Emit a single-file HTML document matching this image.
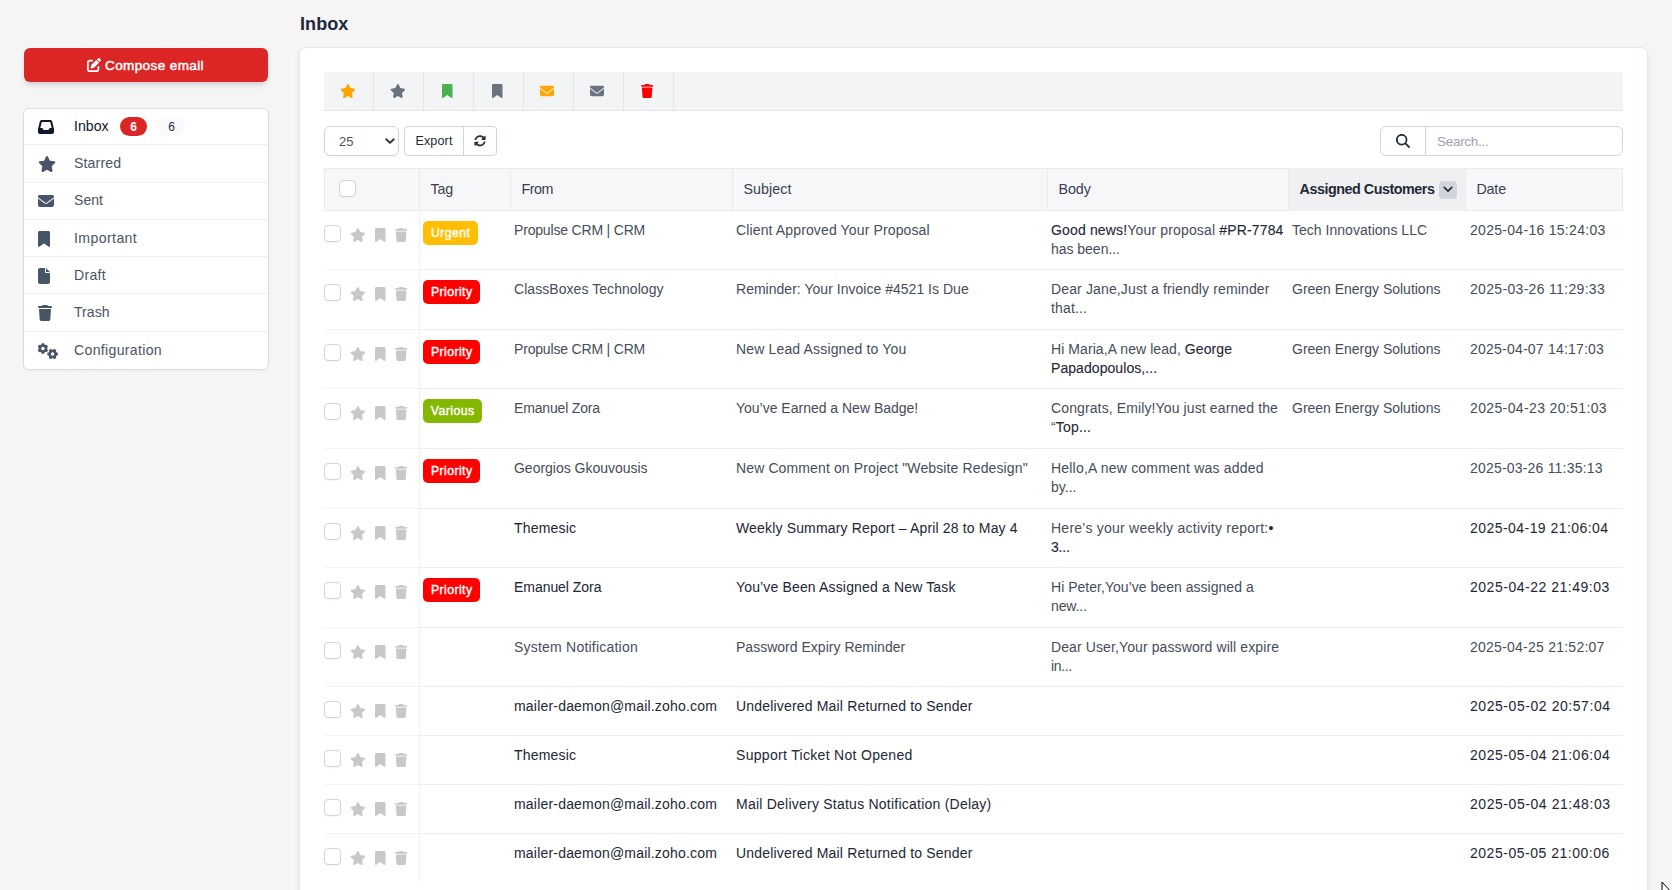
<!DOCTYPE html>
<html lang="en">
<head>
<meta charset="utf-8">
<title>Inbox</title>
<style>
*{box-sizing:border-box;margin:0;padding:0}
html,body{width:1672px;height:890px;overflow:hidden}
body{background:#f5f5f5;font-family:"Liberation Sans",sans-serif;color:#4b5563;font-size:14px;position:relative}
svg{display:block}
b{font-weight:400;color:#1f2937;-webkit-text-stroke:.12px #1f2937}
h1{position:absolute;left:300px;top:12px;font-size:18px;line-height:24px;font-weight:700;color:#1e293b;white-space:nowrap}
.compose{position:absolute;left:24px;top:48px;width:244px;height:34px;background:#dc2626;border-radius:6px;color:#fff;font-weight:700;font-size:13.5px;line-height:34px;box-shadow:0 4px 6px -1px rgba(0,0,0,.12),0 2px 4px -2px rgba(0,0,0,.1);white-space:nowrap}
.compose svg{position:absolute;left:63px;top:9.600px}
.compose span{position:absolute;left:81px;top:1px;font-weight:400;-webkit-text-stroke:.45px #fff}
.side{position:absolute;left:23px;top:108px;width:246px;height:262px;background:#fff;border:1px solid #d9dce1;border-radius:6px;overflow:hidden;box-shadow:0 1px 2px rgba(0,0,0,.05)}
.side .it{position:absolute;left:0;width:244px;height:37.3px;font-size:14.1px;color:#4b5563;white-space:nowrap}
.side .dv{position:absolute;left:0;width:244px;height:1px;background:#eef0f3}
.side .it .ic{position:absolute;left:14px;top:0;height:36px;display:flex;align-items:center}
.side .it .ic svg{fill:#475569}
.side .it .tx{position:absolute;left:50px;top:-1px;line-height:36px}
.side .it.act{color:#111827}
.side .it.act .ic svg{fill:#0f172a}
.b1{position:absolute;left:96px;top:8px;width:27px;height:19px;border-radius:10px;background:#dc2626;color:#fff;font-size:12px;font-weight:700;text-align:center;line-height:20.5px}
.b2{position:absolute;left:134px;top:8px;width:27px;height:19px;border-radius:10px;background:#f8fafc;color:#1f2937;font-size:12px;text-align:center;line-height:20.5px}
.card{position:absolute;left:299px;top:47px;width:1349px;height:860px;background:#fff;border:1px solid #e4e8ee;border-radius:7px;box-shadow:0 4px 6px -1px rgba(0,0,0,.1),0 2px 4px -2px rgba(0,0,0,.08)}
.tools{position:absolute;left:24px;top:24px;width:1299px;height:39px;background:#f3f4f6;border-bottom:1px solid #e3e5ea}
.tc{position:absolute;top:0;width:50px;height:38px;border-right:1px solid #e3e5ea}
.tc svg{position:absolute;top:12px}
.sel{position:absolute;left:24px;top:78px;width:75px;height:30px;border:1px solid #d1d5db;border-radius:6px;font-size:13px;color:#4b5563;box-shadow:0 1px 2px rgba(0,0,0,.05)}
.sel span{position:absolute;left:14px;top:0;line-height:30px}
.sel svg{position:absolute;left:59.7px;top:11px}
.btn{position:absolute;top:78px;height:30px;border:1px solid #d1d5db;font-size:12.5px;color:#1f2937;line-height:28px;text-align:center;background:#fff;white-space:nowrap}
.export{left:104px;width:60px;border-radius:4px 0 0 4px}
.refresh{left:163px;width:34px;border-radius:0 4px 4px 0;display:flex;align-items:center;justify-content:center}
.sicon{position:absolute;left:1080px;top:78px;width:46px;height:30px;border:1px solid #d1d5db;border-radius:6px 0 0 6px;display:flex;align-items:center;justify-content:center}
.sinput{position:absolute;left:1125px;top:78px;width:198px;height:30px;border:1px solid #d1d5db;border-radius:0 6px 6px 0;font-size:13.5px;color:#9ca3af;line-height:29px;padding-left:11px;white-space:nowrap}
.thead{position:absolute;left:24px;top:120px;width:1299px;height:43px;background:#f7f7f9;border:1px solid #e8eaed;font-size:14.3px;color:#374151}
.th{position:absolute;top:-1px;height:43px;line-height:43px;border-right:1px solid #e8eaed;padding-left:10.5px;white-space:nowrap;margin-left:-1px}
.th.c6{border-right:0}
.c0{left:0;width:96px}
.c1{left:96px;width:91px}
.c2{left:187px;width:222px}
.c3{left:409px;width:315px}
.c4{left:724px;width:241px}
.c5{left:965px;width:177px}
.c6{left:1142px;width:157px}
.th.sorted{background:#f0f0f3;font-weight:700;color:#1f2937}
.chev{position:absolute;left:150px;top:12.5px;width:18px;height:18px;border-radius:4px;background:#d1d5db;display:flex;align-items:center;justify-content:center}
.cb{position:absolute;width:16px;height:16px;border:1px solid #d1d5db;border-radius:4px;background:#fff;box-shadow:0 1px 1px rgba(0,0,0,.04)}
.th .cb{left:15px;top:12.3px;width:16.5px;height:16.5px}
.tbody{position:absolute;left:24px;top:163px;width:1299px}
.tr{position:absolute;left:0;width:1299px}
.tr.two{height:60px}
.tr.one{height:49px}
.td{position:absolute;top:0;height:100%;padding:10px 0 0 4px;line-height:19.3px;font-size:14px;white-space:nowrap;color:#454d5a}
.td.c0{border-right:1px solid #f1f2f4}
.td.c1{padding:0}
.td.c2{left:186px}
.td.c3{left:408px}
.td.c4{left:723px}
.td.c5{left:964px}
.td.c6{left:1142px}
.tr.un .td{color:#1f2937;-webkit-text-stroke:.04px #1f2937}
.tr .td.c4{color:#454d5a;-webkit-text-stroke:0}
.td .cb{left:.3px;top:14.3px;width:16.5px;height:16.5px}
.a{position:absolute;top:17px}
.a svg{fill:#c8c8c8}
.a.s{left:26.3px}
.a.b{left:51.1px}
.a.t{left:71.4px}
.bd{position:absolute;left:3px;top:10px;height:24px;border-radius:5px;color:#fff;font-size:12.3px;font-weight:400;-webkit-text-stroke:.4px #fff;line-height:24px;text-align:center;white-space:nowrap}
.bd.urgent{background:#ffbe03}
.bd.priority{background:#ff0000}
.bd.various{background:#84b800}
.cursor{position:absolute;left:1661px;top:881px}
.hl{position:absolute;left:0;width:1299px;height:1px;background:linear-gradient(90deg,#f3f4f6 0,#f3f4f6 96px,#ecedf0 96px)}

</style>
</head>
<body>
<h1><span style="letter-spacing:0.089px">Inbox</span></h1>
<div class="compose"><svg viewBox="0 0 512 512" width="14" height="14" fill="#fff" fill-rule="evenodd"><path d="M471.600 21.700c-21.900-21.900-57.300-21.900-79.200 0L362.300 51.700l97.900 97.900 30.100-30.100c21.900-21.900 21.900-57.300 0-79.200L471.600 21.700zm-299.200 220c-6.100 6.100-10.800 13.600-13.500 21.900l-29.600 88.800c-2.900 8.600-.600 18.100 5.800 24.600s15.900 8.700 24.600 5.800l88.800-29.600c8.200-2.700 15.700-7.400 21.900-13.500L437.700 172.300 339.700 74.300 172.400 241.700zM96 64C43 64 0 107 0 160V416c0 53 43 96 96 96H352c53 0 96-43 96-96V320c0-17.700-14.300-32-32-32s-32 14.300-32 32v96c0 17.700-14.300 32-32 32H96c-17.700 0-32-14.300-32-32V160c0-17.700 14.300-32 32-32h96c17.700 0 32-14.300 32-32s-14.300-32-32-32H96z"/></svg><span style="letter-spacing:0.400px">Compose email</span></div>
<div class="side">
<div class="it act" style="top:0.0px"><span class="ic"><svg viewBox="0 0 512 512" width="16" height="16" fill-rule="evenodd"><path d="M121 32C91.600 32 66 52 58.900 80.500L1.900 308.400C.600 313.500 0 318.700 0 323.900V416c0 35.300 28.700 64 64 64H448c35.300 0 64-28.700 64-64V323.900c0-5.200-.600-10.400-1.900-15.500l-57-227.900C446 52 420.400 32 391 32H121zm0 64H391l48 192H387.800c-12.100 0-23.200 6.800-28.600 17.700l-14.300 28.600c-5.400 10.800-16.500 17.700-28.600 17.700H195.800c-12.100 0-23.200-6.800-28.600-17.700l-14.300-28.600c-5.400-10.800-16.500-17.700-28.600-17.700H73L121 96z"/></svg></span><span class="tx" style="letter-spacing:0.026px">Inbox</span><span class="b1">6</span><span class="b2">6</span></div>
<div class="dv" style="top:35px"></div>
<div class="it" style="top:37.0px"><span class="ic"><svg viewBox="0 0 576 512" width="18" height="16" fill-rule="evenodd"><path d="M316.900 18C311.600 7 300.400 0 288.100 0s-23.400 7-28.800 18L195 150.300 51.400 171.500c-12 1.800-22 10.200-25.700 21.700s-.700 24.200 7.900 32.700L137.800 329 113.200 474.700c-2 12 3 24.200 12.900 31.300s23 8 33.800 2.300l128.300-68.500 128.300 68.500c10.800 5.700 23.900 4.900 33.800-2.300s14.900-19.300 12.900-31.300L438.500 329 542.700 225.900c8.600-8.500 11.700-21.200 7.900-32.700s-13.700-19.900-25.700-21.700L381.200 150.300 316.900 18z"/></svg></span><span class="tx" style="letter-spacing:0.151px">Starred</span></div>
<div class="dv" style="top:73px"></div>
<div class="it" style="top:74.0px"><span class="ic"><svg viewBox="0 0 512 512" width="16" height="16" fill-rule="evenodd"><path d="M48 64C21.500 64 0 85.500 0 112c0 15.100 7.100 29.300 19.200 38.400L236.800 313.600c11.400 8.500 27 8.500 38.400 0L492.800 150.400c12.100-9.100 19.200-23.300 19.200-38.400c0-26.500-21.500-48-48-48H48zM0 176V384c0 35.300 28.700 64 64 64H448c35.300 0 64-28.700 64-64V176L294.400 339.200c-22.800 17.100-54 17.100-76.800 0L0 176z"/></svg></span><span class="tx" style="letter-spacing:0.000px">Sent</span></div>
<div class="dv" style="top:110px"></div>
<div class="it" style="top:112.0px"><span class="ic"><svg viewBox="0 0 384 512" width="12" height="16" fill-rule="evenodd"><path d="M0 48V487.700C0 501.100 10.900 512 24.300 512c5 0 9.900-1.500 14-4.400L192 400 345.700 507.600c4.100 2.900 9 4.400 14 4.400c13.400 0 24.300-10.900 24.300-24.300V48c0-26.500-21.500-48-48-48H48C21.500 0 0 21.500 0 48z"/></svg></span><span class="tx" style="letter-spacing:0.406px">Important</span></div>
<div class="dv" style="top:147px"></div>
<div class="it" style="top:149.0px"><span class="ic"><svg viewBox="0 0 384 512" width="12" height="16" fill-rule="evenodd"><path d="M0 64C0 28.700 28.700 0 64 0H224V128c0 17.700 14.300 32 32 32H384V448c0 35.300-28.700 64-64 64H64c-35.300 0-64-28.700-64-64V64zm384 64H256V0L384 128z"/></svg></span><span class="tx" style="letter-spacing:0.301px">Draft</span></div>
<div class="dv" style="top:184px"></div>
<div class="it" style="top:186.0px"><span class="ic"><svg viewBox="0 0 448 512" width="14" height="16" fill-rule="evenodd"><path d="M135.200 17.700L128 32H32C14.300 32 0 46.300 0 64S14.300 96 32 96H416c17.700 0 32-14.300 32-32s-14.300-32-32-32H320l-7.200-14.300C307.400 6.800 296.300 0 284.200 0H163.800c-12.100 0-23.200 6.800-28.600 17.700zM416 128H32L53.200 467c1.600 25.300 22.600 45 47.900 45H346.900c25.300 0 46.300-19.700 47.900-45L416 128z"/></svg></span><span class="tx" style="letter-spacing:0.019px">Trash</span></div>
<div class="dv" style="top:222px"></div>
<div class="it" style="top:224.0px"><span class="ic"><svg viewBox="0 0 640 512" width="20" height="16" fill-rule="evenodd"><path d="M106.2 47.7 L119.3 7.2 L194.7 7.2 L207.8 47.7 L242.7 67.9 L284.3 58.9 L322.1 124.3 L293.5 155.8 L293.5 196.2 L322.1 227.7 L284.3 293.1 L242.7 284.1 L207.8 304.3 L194.7 344.8 L119.3 344.8 L106.2 304.3 L71.3 284.1 L29.7 293.1 L-8.1 227.7 L20.5 196.2 L20.5 155.8 L-8.1 124.3 L29.7 58.9 L71.3 67.9Z M103.0 176.0 a54.0 54.0 0 1 0 108.0 0 a54.0 54.0 0 1 0 -108.0 0Z M595.3 301.2 L635.8 314.3 L635.8 389.7 L595.3 402.8 L575.1 437.7 L584.1 479.3 L518.7 517.1 L487.2 488.5 L446.8 488.5 L415.3 517.1 L349.9 479.3 L358.9 437.7 L338.7 402.8 L298.2 389.7 L298.2 314.3 L338.7 301.2 L358.9 266.3 L349.9 224.7 L415.3 186.9 L446.8 215.5 L487.2 215.5 L518.7 186.9 L584.1 224.7 L575.1 266.3Z M413.0 352.0 a54.0 54.0 0 1 0 108.0 0 a54.0 54.0 0 1 0 -108.0 0Z"/></svg></span><span class="tx" style="letter-spacing:0.316px">Configuration</span></div>
</div>
<div class="card">
<div class="tools"><div class="tc" style="left:0px"><svg viewBox="0 0 576 512" width="15.75" height="14" fill="#ffa500" style="left:15.62px;top:12.0px" fill-rule="evenodd"><path d="M316.900 18C311.600 7 300.400 0 288.100 0s-23.400 7-28.800 18L195 150.300 51.400 171.500c-12 1.800-22 10.200-25.700 21.700s-.700 24.200 7.900 32.700L137.800 329 113.200 474.700c-2 12 3 24.200 12.900 31.300s23 8 33.800 2.300l128.300-68.500 128.300 68.500c10.800 5.700 23.900 4.900 33.800-2.300s14.900-19.300 12.900-31.300L438.500 329 542.700 225.900c8.600-8.500 11.700-21.200 7.900-32.700s-13.700-19.900-25.700-21.700L381.200 150.300 316.900 18z"/></svg></div><div class="tc" style="left:50px"><svg viewBox="0 0 576 512" width="15.75" height="14" fill="#6b7280" style="left:15.62px;top:12.0px" fill-rule="evenodd"><path d="M316.900 18C311.600 7 300.400 0 288.100 0s-23.400 7-28.800 18L195 150.300 51.400 171.500c-12 1.800-22 10.200-25.700 21.700s-.700 24.200 7.900 32.700L137.800 329 113.200 474.700c-2 12 3 24.200 12.900 31.300s23 8 33.800 2.300l128.300-68.500 128.300 68.500c10.800 5.700 23.900 4.900 33.800-2.300s14.900-19.300 12.900-31.300L438.500 329 542.700 225.900c8.600-8.500 11.700-21.200 7.900-32.700s-13.700-19.900-25.700-21.700L381.200 150.300 316.900 18z"/></svg></div><div class="tc" style="left:100px"><svg viewBox="0 0 384 512" width="10.5" height="14" fill="#4caf50" style="left:18.25px;top:12.0px" fill-rule="evenodd"><path d="M0 48V487.700C0 501.100 10.900 512 24.300 512c5 0 9.900-1.500 14-4.400L192 400 345.700 507.600c4.100 2.900 9 4.400 14 4.400c13.400 0 24.300-10.900 24.300-24.300V48c0-26.500-21.500-48-48-48H48C21.500 0 0 21.500 0 48z"/></svg></div><div class="tc" style="left:150px"><svg viewBox="0 0 384 512" width="10.5" height="14" fill="#6b7280" style="left:18.25px;top:12.0px" fill-rule="evenodd"><path d="M0 48V487.700C0 501.100 10.900 512 24.300 512c5 0 9.900-1.500 14-4.400L192 400 345.700 507.600c4.100 2.900 9 4.400 14 4.400c13.400 0 24.300-10.900 24.300-24.300V48c0-26.500-21.500-48-48-48H48C21.500 0 0 21.500 0 48z"/></svg></div><div class="tc" style="left:200px"><svg viewBox="0 0 512 512" width="14" height="14" fill="#ffa500" style="left:15.80px;top:11.5px" fill-rule="evenodd"><path d="M48 64C21.500 64 0 85.500 0 112c0 15.100 7.100 29.300 19.200 38.400L236.800 313.600c11.400 8.500 27 8.500 38.400 0L492.800 150.400c12.100-9.100 19.200-23.300 19.200-38.400c0-26.500-21.500-48-48-48H48zM0 176V384c0 35.300 28.700 64 64 64H448c35.300 0 64-28.700 64-64V176L294.400 339.200c-22.800 17.100-54 17.100-76.800 0L0 176z"/></svg></div><div class="tc" style="left:250px"><svg viewBox="0 0 512 512" width="14" height="14" fill="#6b7280" style="left:15.80px;top:11.5px" fill-rule="evenodd"><path d="M48 64C21.500 64 0 85.500 0 112c0 15.100 7.100 29.300 19.200 38.400L236.800 313.600c11.400 8.500 27 8.500 38.400 0L492.800 150.400c12.100-9.100 19.200-23.300 19.200-38.400c0-26.500-21.500-48-48-48H48zM0 176V384c0 35.300 28.700 64 64 64H448c35.300 0 64-28.700 64-64V176L294.400 339.200c-22.800 17.100-54 17.100-76.800 0L0 176z"/></svg></div><div class="tc" style="left:300px"><svg viewBox="0 0 448 512" width="12.25" height="14" fill="#ff0000" style="left:17.38px;top:12.0px" fill-rule="evenodd"><path d="M135.200 17.700L128 32H32C14.300 32 0 46.300 0 64S14.300 96 32 96H416c17.700 0 32-14.300 32-32s-14.300-32-32-32H320l-7.200-14.300C307.400 6.800 296.300 0 284.200 0H163.800c-12.100 0-23.200 6.800-28.600 17.700zM416 128H32L53.200 467c1.600 25.300 22.600 45 47.900 45H346.900c25.300 0 46.300-19.700 47.900-45L416 128z"/></svg></div></div>
<div class="sel"><span>25</span><svg viewBox="0 0 12 8" width="10" height="6.600"><path d="M1.500 1.500L6 6l4.500-4.500" fill="none" stroke="#333" stroke-width="2.300" stroke-linecap="round" stroke-linejoin="round"/></svg></div>
<div class="btn export"><span style="letter-spacing:0.156px">Export</span></div><div class="btn refresh"><svg viewBox="0 0 512 512" width="12" height="11.6" fill="#273142" fill-rule="evenodd"><path d="M370.720 133.280C339.458 104.008 298.888 87.962 255.848 88c-77.458.068-144.328 53.178-162.791 126.850-1.344 5.363-6.122 9.150-11.651 9.150H24.103c-7.498 0-13.194-6.807-11.807-14.176C33.933 94.924 134.813 8 256 8c66.448 0 126.791 26.136 171.315 68.685L463.030 40.970C478.149 25.851 504 36.559 504 57.941V192c0 13.255-10.745 24-24 24H345.941c-21.382 0-32.090-25.851-16.971-40.971l41.750-41.749zM32 296h134.059c21.382 0 32.090 25.851 16.971 40.971l-41.750 41.750c31.262 29.273 71.835 45.319 114.876 45.280 77.418-.070 144.315-53.144 162.787-126.849 1.344-5.363 6.122-9.150 11.651-9.150h57.304c7.498 0 13.194 6.807 11.807 14.176C478.067 417.076 377.187 504 256 504c-66.448 0-126.791-26.136-171.315-68.685L48.970 471.030C33.851 486.149 8 475.441 8 454.059V320c0-13.255 10.745-24 24-24z"/></svg></div>
<div class="sicon"><svg viewBox="0 0 512 512" width="14" height="14" fill="#1e293b" fill-rule="evenodd"><path d="M416 208c0 45.900-14.900 88.300-40 122.700L502.600 457.400c12.500 12.500 12.500 32.800 0 45.300s-32.800 12.500-45.300 0L330.700 376c-34.400 25.200-76.800 40-122.700 40C93.100 416 0 322.900 0 208S93.100 0 208 0S416 93.100 416 208zM208 352a144 144 0 1 0 0-288 144 144 0 1 0 0 288z"/></svg></div><div class="sinput"><span style="letter-spacing:-0.286px">Search...</span></div>
<div class="thead">
<div class="th c0"><span class="cb"></span></div><div class="th c1"><span style="letter-spacing:-0.145px">Tag</span></div><div class="th c2"><span style="letter-spacing:-0.503px">From</span></div><div class="th c3"><span style="letter-spacing:0.048px">Subject</span></div><div class="th c4"><span style="letter-spacing:-0.084px">Body</span></div><div class="th c5 sorted"><span style="letter-spacing:-0.447px">Assigned Customers</span><span class="chev"><svg viewBox="0 0 12 8" width="10" height="7"><path d="M1.500 1.500L6 6l4.500-4.500" fill="none" stroke="#1f2937" stroke-width="2" stroke-linecap="round" stroke-linejoin="round"/></svg></span></div><div class="th c6"><span style="letter-spacing:-0.201px">Date</span></div>
</div>
<div class="tbody">
<div class="hl" style="top:58px"></div><div class="tr two" style="top:0.0px"><div class="td c0"><span class="cb"></span><span class="a s"><svg viewBox="0 0 576 512" width="15.75" height="14" fill-rule="evenodd"><path d="M316.900 18C311.600 7 300.400 0 288.100 0s-23.400 7-28.800 18L195 150.300 51.400 171.500c-12 1.800-22 10.200-25.700 21.700s-.700 24.200 7.900 32.700L137.800 329 113.200 474.700c-2 12 3 24.200 12.900 31.300s23 8 33.800 2.300l128.300-68.500 128.300 68.500c10.800 5.700 23.900 4.900 33.800-2.300s14.900-19.300 12.900-31.300L438.500 329 542.700 225.900c8.600-8.500 11.700-21.200 7.900-32.700s-13.700-19.900-25.700-21.700L381.200 150.300 316.900 18z"/></svg></span><span class="a b"><svg viewBox="0 0 384 512" width="10.5" height="14" fill-rule="evenodd"><path d="M0 48V487.700C0 501.100 10.900 512 24.300 512c5 0 9.900-1.500 14-4.400L192 400 345.700 507.600c4.100 2.900 9 4.400 14 4.400c13.400 0 24.300-10.900 24.300-24.300V48c0-26.500-21.500-48-48-48H48C21.500 0 0 21.500 0 48z"/></svg></span><span class="a t"><svg viewBox="0 0 448 512" width="12.25" height="14" fill-rule="evenodd"><path d="M135.200 17.700L128 32H32C14.300 32 0 46.300 0 64S14.300 96 32 96H416c17.700 0 32-14.300 32-32s-14.300-32-32-32H320l-7.200-14.300C307.400 6.800 296.300 0 284.200 0H163.800c-12.100 0-23.200 6.800-28.600 17.700zM416 128H32L53.200 467c1.600 25.300 22.600 45 47.900 45H346.900c25.300 0 46.300-19.700 47.900-45L416 128z"/></svg></span></div><div class="td c1"><span class="bd urgent" style="width:55.4px"><span style="letter-spacing:0.432px">Urgent</span></span></div><div class="td c2"><span style="letter-spacing:-0.179px">Propulse CRM | CRM</span></div><div class="td c3"><span style="letter-spacing:0.133px">Client Approved Your Proposal</span></div><div class="td c4"><div class="ln" style="letter-spacing:0.157px"><b>Good news!</b>Your proposal <b>#PR-7784</b></div><div class="ln" style="letter-spacing:-0.027px">has been...</div></div><div class="td c5"><span style="letter-spacing:0.024px">Tech Innovations LLC</span></div><div class="td c6"><span style="letter-spacing:0.292px">2025-04-16 15:24:03</span></div></div>
<div class="hl" style="top:118px"></div><div class="tr two" style="top:59.0px"><div class="td c0"><span class="cb"></span><span class="a s"><svg viewBox="0 0 576 512" width="15.75" height="14" fill-rule="evenodd"><path d="M316.900 18C311.600 7 300.400 0 288.100 0s-23.400 7-28.800 18L195 150.300 51.400 171.500c-12 1.800-22 10.200-25.700 21.700s-.700 24.200 7.900 32.700L137.800 329 113.200 474.700c-2 12 3 24.200 12.900 31.300s23 8 33.800 2.300l128.300-68.500 128.300 68.500c10.800 5.700 23.900 4.900 33.800-2.300s14.900-19.300 12.900-31.300L438.500 329 542.700 225.900c8.600-8.500 11.700-21.200 7.900-32.700s-13.700-19.900-25.700-21.700L381.200 150.300 316.900 18z"/></svg></span><span class="a b"><svg viewBox="0 0 384 512" width="10.5" height="14" fill-rule="evenodd"><path d="M0 48V487.700C0 501.100 10.900 512 24.300 512c5 0 9.900-1.500 14-4.400L192 400 345.700 507.600c4.100 2.900 9 4.400 14 4.400c13.400 0 24.300-10.900 24.300-24.300V48c0-26.500-21.500-48-48-48H48C21.500 0 0 21.500 0 48z"/></svg></span><span class="a t"><svg viewBox="0 0 448 512" width="12.25" height="14" fill-rule="evenodd"><path d="M135.200 17.700L128 32H32C14.300 32 0 46.300 0 64S14.300 96 32 96H416c17.700 0 32-14.300 32-32s-14.300-32-32-32H320l-7.200-14.300C307.400 6.800 296.300 0 284.200 0H163.800c-12.100 0-23.200 6.800-28.600 17.700zM416 128H32L53.200 467c1.600 25.300 22.600 45 47.900 45H346.900c25.300 0 46.300-19.700 47.900-45L416 128z"/></svg></span></div><div class="td c1"><span class="bd priority" style="width:57.4px"><span style="letter-spacing:0.405px">Priority</span></span></div><div class="td c2"><span style="letter-spacing:0.059px">ClassBoxes Technology</span></div><div class="td c3"><span style="letter-spacing:0.022px">Reminder: Your Invoice #4521 Is Due</span></div><div class="td c4"><div class="ln" style="letter-spacing:0.134px">Dear Jane,Just a friendly reminder</div><div class="ln" style="letter-spacing:0.149px">that...</div></div><div class="td c5"><span style="letter-spacing:-0.011px">Green Energy Solutions</span></div><div class="td c6"><span style="letter-spacing:0.321px">2025-03-26 11:29:33</span></div></div>
<div class="hl" style="top:177px"></div><div class="tr two" style="top:119.0px"><div class="td c0"><span class="cb"></span><span class="a s"><svg viewBox="0 0 576 512" width="15.75" height="14" fill-rule="evenodd"><path d="M316.900 18C311.600 7 300.400 0 288.100 0s-23.400 7-28.800 18L195 150.300 51.400 171.500c-12 1.800-22 10.200-25.700 21.700s-.700 24.200 7.900 32.700L137.800 329 113.200 474.700c-2 12 3 24.200 12.900 31.300s23 8 33.800 2.300l128.300-68.500 128.300 68.500c10.800 5.700 23.900 4.900 33.800-2.300s14.900-19.300 12.900-31.300L438.500 329 542.700 225.900c8.600-8.500 11.700-21.200 7.900-32.700s-13.700-19.900-25.700-21.700L381.200 150.300 316.900 18z"/></svg></span><span class="a b"><svg viewBox="0 0 384 512" width="10.5" height="14" fill-rule="evenodd"><path d="M0 48V487.700C0 501.100 10.900 512 24.300 512c5 0 9.900-1.500 14-4.400L192 400 345.700 507.600c4.100 2.900 9 4.400 14 4.400c13.400 0 24.300-10.900 24.300-24.300V48c0-26.500-21.500-48-48-48H48C21.500 0 0 21.500 0 48z"/></svg></span><span class="a t"><svg viewBox="0 0 448 512" width="12.25" height="14" fill-rule="evenodd"><path d="M135.200 17.700L128 32H32C14.300 32 0 46.300 0 64S14.300 96 32 96H416c17.700 0 32-14.300 32-32s-14.300-32-32-32H320l-7.200-14.300C307.400 6.800 296.300 0 284.200 0H163.800c-12.100 0-23.200 6.800-28.600 17.700zM416 128H32L53.200 467c1.600 25.300 22.600 45 47.900 45H346.900c25.300 0 46.300-19.700 47.900-45L416 128z"/></svg></span></div><div class="td c1"><span class="bd priority" style="width:57.4px"><span style="letter-spacing:0.405px">Priority</span></span></div><div class="td c2"><span style="letter-spacing:-0.179px">Propulse CRM | CRM</span></div><div class="td c3"><span style="letter-spacing:0.158px">New Lead Assigned to You</span></div><div class="td c4"><div class="ln" style="letter-spacing:0.075px">Hi Maria,A new lead, <b>George</b></div><div class="ln" style="letter-spacing:0.065px"><b>Papadopoulos,...</b></div></div><div class="td c5"><span style="letter-spacing:-0.011px">Green Energy Solutions</span></div><div class="td c6"><span style="letter-spacing:0.216px">2025-04-07 14:17:03</span></div></div>
<div class="hl" style="top:237px"></div><div class="tr two" style="top:178.0px"><div class="td c0"><span class="cb"></span><span class="a s"><svg viewBox="0 0 576 512" width="15.75" height="14" fill-rule="evenodd"><path d="M316.900 18C311.600 7 300.400 0 288.100 0s-23.400 7-28.800 18L195 150.300 51.400 171.500c-12 1.800-22 10.200-25.700 21.700s-.700 24.200 7.900 32.700L137.800 329 113.200 474.700c-2 12 3 24.200 12.900 31.300s23 8 33.800 2.300l128.300-68.500 128.300 68.500c10.800 5.700 23.900 4.900 33.800-2.300s14.900-19.300 12.900-31.300L438.500 329 542.700 225.900c8.600-8.500 11.700-21.200 7.900-32.700s-13.700-19.900-25.700-21.700L381.200 150.300 316.900 18z"/></svg></span><span class="a b"><svg viewBox="0 0 384 512" width="10.5" height="14" fill-rule="evenodd"><path d="M0 48V487.700C0 501.100 10.900 512 24.300 512c5 0 9.900-1.500 14-4.400L192 400 345.700 507.600c4.100 2.900 9 4.400 14 4.400c13.400 0 24.300-10.900 24.300-24.300V48c0-26.500-21.500-48-48-48H48C21.500 0 0 21.500 0 48z"/></svg></span><span class="a t"><svg viewBox="0 0 448 512" width="12.25" height="14" fill-rule="evenodd"><path d="M135.200 17.700L128 32H32C14.300 32 0 46.300 0 64S14.300 96 32 96H416c17.700 0 32-14.300 32-32s-14.300-32-32-32H320l-7.200-14.300C307.400 6.800 296.300 0 284.200 0H163.800c-12.100 0-23.200 6.800-28.600 17.700zM416 128H32L53.200 467c1.600 25.300 22.600 45 47.900 45H346.900c25.300 0 46.300-19.700 47.900-45L416 128z"/></svg></span></div><div class="td c1"><span class="bd various" style="width:59.3px"><span style="letter-spacing:0.418px">Various</span></span></div><div class="td c2"><span style="letter-spacing:-0.168px">Emanuel Zora</span></div><div class="td c3"><span style="letter-spacing:-0.007px">You’ve Earned a New Badge!</span></div><div class="td c4"><div class="ln" style="letter-spacing:0.118px">Congrats, Emily!You just earned the</div><div class="ln" style="letter-spacing:0.166px">“<b>Top...</b></div></div><div class="td c5"><span style="letter-spacing:-0.011px">Green Energy Solutions</span></div><div class="td c6"><span style="letter-spacing:0.368px">2025-04-23 20:51:03</span></div></div>
<div class="hl" style="top:297px"></div><div class="tr two" style="top:238.0px"><div class="td c0"><span class="cb"></span><span class="a s"><svg viewBox="0 0 576 512" width="15.75" height="14" fill-rule="evenodd"><path d="M316.900 18C311.600 7 300.400 0 288.100 0s-23.400 7-28.800 18L195 150.300 51.400 171.500c-12 1.800-22 10.200-25.700 21.700s-.700 24.200 7.900 32.700L137.800 329 113.200 474.700c-2 12 3 24.200 12.900 31.300s23 8 33.800 2.300l128.300-68.500 128.300 68.500c10.800 5.700 23.900 4.900 33.800-2.300s14.900-19.300 12.900-31.300L438.500 329 542.700 225.900c8.600-8.500 11.700-21.200 7.900-32.700s-13.700-19.900-25.700-21.700L381.200 150.300 316.900 18z"/></svg></span><span class="a b"><svg viewBox="0 0 384 512" width="10.5" height="14" fill-rule="evenodd"><path d="M0 48V487.700C0 501.100 10.900 512 24.300 512c5 0 9.900-1.500 14-4.400L192 400 345.700 507.600c4.100 2.900 9 4.400 14 4.400c13.400 0 24.300-10.900 24.300-24.300V48c0-26.500-21.500-48-48-48H48C21.500 0 0 21.500 0 48z"/></svg></span><span class="a t"><svg viewBox="0 0 448 512" width="12.25" height="14" fill-rule="evenodd"><path d="M135.200 17.700L128 32H32C14.300 32 0 46.300 0 64S14.300 96 32 96H416c17.700 0 32-14.300 32-32s-14.300-32-32-32H320l-7.200-14.300C307.400 6.800 296.300 0 284.200 0H163.800c-12.100 0-23.200 6.800-28.600 17.700zM416 128H32L53.200 467c1.600 25.300 22.600 45 47.900 45H346.900c25.300 0 46.300-19.700 47.900-45L416 128z"/></svg></span></div><div class="td c1"><span class="bd priority" style="width:57.4px"><span style="letter-spacing:0.405px">Priority</span></span></div><div class="td c2"><span style="letter-spacing:-0.019px">Georgios Gkouvousis</span></div><div class="td c3"><span style="letter-spacing:0.123px">New Comment on Project "Website Redesign"</span></div><div class="td c4"><div class="ln" style="letter-spacing:0.196px">Hello,A new comment was added</div><div class="ln" style="letter-spacing:0.017px">by...</div></div><div class="td c5"></div><div class="td c6"><span style="letter-spacing:0.196px">2025-03-26 11:35:13</span></div></div>
<div class="hl" style="top:356px"></div><div class="tr two un" style="top:298.0px"><div class="td c0"><span class="cb"></span><span class="a s"><svg viewBox="0 0 576 512" width="15.75" height="14" fill-rule="evenodd"><path d="M316.900 18C311.600 7 300.400 0 288.100 0s-23.400 7-28.800 18L195 150.300 51.400 171.500c-12 1.800-22 10.200-25.700 21.700s-.700 24.200 7.900 32.700L137.800 329 113.200 474.700c-2 12 3 24.200 12.900 31.300s23 8 33.800 2.300l128.300-68.500 128.300 68.500c10.800 5.700 23.900 4.900 33.800-2.300s14.900-19.300 12.900-31.300L438.500 329 542.700 225.900c8.600-8.500 11.700-21.200 7.900-32.700s-13.700-19.900-25.700-21.700L381.200 150.300 316.900 18z"/></svg></span><span class="a b"><svg viewBox="0 0 384 512" width="10.5" height="14" fill-rule="evenodd"><path d="M0 48V487.700C0 501.100 10.900 512 24.300 512c5 0 9.900-1.500 14-4.400L192 400 345.700 507.600c4.100 2.900 9 4.400 14 4.400c13.400 0 24.300-10.900 24.300-24.300V48c0-26.500-21.500-48-48-48H48C21.500 0 0 21.500 0 48z"/></svg></span><span class="a t"><svg viewBox="0 0 448 512" width="12.25" height="14" fill-rule="evenodd"><path d="M135.200 17.700L128 32H32C14.300 32 0 46.300 0 64S14.300 96 32 96H416c17.700 0 32-14.300 32-32s-14.300-32-32-32H320l-7.200-14.300C307.400 6.800 296.300 0 284.200 0H163.800c-12.100 0-23.200 6.800-28.600 17.700zM416 128H32L53.200 467c1.600 25.300 22.600 45 47.900 45H346.900c25.300 0 46.300-19.700 47.900-45L416 128z"/></svg></span></div><div class="td c1"></div><div class="td c2"><span style="letter-spacing:0.202px">Themesic</span></div><div class="td c3"><span style="letter-spacing:0.161px">Weekly Summary Report – April 28 to May 4</span></div><div class="td c4"><div class="ln" style="letter-spacing:0.241px">Here’s your weekly activity report:<b>•</b></div><div class="ln" style="letter-spacing:-0.220px"><b>3...</b></div></div><div class="td c5"></div><div class="td c6"><span style="letter-spacing:0.449px">2025-04-19 21:06:04</span></div></div>
<div class="hl" style="top:416px"></div><div class="tr two un" style="top:357.0px"><div class="td c0"><span class="cb"></span><span class="a s"><svg viewBox="0 0 576 512" width="15.75" height="14" fill-rule="evenodd"><path d="M316.900 18C311.600 7 300.400 0 288.100 0s-23.400 7-28.800 18L195 150.300 51.400 171.500c-12 1.800-22 10.200-25.700 21.700s-.700 24.200 7.900 32.700L137.800 329 113.200 474.700c-2 12 3 24.200 12.900 31.300s23 8 33.800 2.300l128.300-68.500 128.300 68.500c10.800 5.700 23.900 4.900 33.800-2.300s14.900-19.300 12.900-31.300L438.500 329 542.700 225.900c8.600-8.500 11.700-21.200 7.900-32.700s-13.700-19.900-25.700-21.700L381.200 150.300 316.900 18z"/></svg></span><span class="a b"><svg viewBox="0 0 384 512" width="10.5" height="14" fill-rule="evenodd"><path d="M0 48V487.700C0 501.100 10.900 512 24.300 512c5 0 9.900-1.500 14-4.400L192 400 345.700 507.600c4.100 2.900 9 4.400 14 4.400c13.400 0 24.300-10.900 24.300-24.300V48c0-26.500-21.500-48-48-48H48C21.500 0 0 21.500 0 48z"/></svg></span><span class="a t"><svg viewBox="0 0 448 512" width="12.25" height="14" fill-rule="evenodd"><path d="M135.200 17.700L128 32H32C14.300 32 0 46.300 0 64S14.300 96 32 96H416c17.700 0 32-14.300 32-32s-14.300-32-32-32H320l-7.200-14.300C307.400 6.800 296.300 0 284.200 0H163.800c-12.100 0-23.200 6.800-28.600 17.700zM416 128H32L53.200 467c1.600 25.300 22.600 45 47.900 45H346.900c25.300 0 46.300-19.700 47.900-45L416 128z"/></svg></span></div><div class="td c1"><span class="bd priority" style="width:57.4px"><span style="letter-spacing:0.405px">Priority</span></span></div><div class="td c2"><span style="letter-spacing:-0.047px">Emanuel Zora</span></div><div class="td c3"><span style="letter-spacing:0.154px">You’ve Been Assigned a New Task</span></div><div class="td c4"><div class="ln" style="letter-spacing:0.028px">Hi Peter,You’ve been assigned a</div><div class="ln" style="letter-spacing:-0.108px">new...</div></div><div class="td c5"></div><div class="td c6"><span style="letter-spacing:0.514px">2025-04-22 21:49:03</span></div></div>
<div class="hl" style="top:475px"></div><div class="tr two" style="top:417.0px"><div class="td c0"><span class="cb"></span><span class="a s"><svg viewBox="0 0 576 512" width="15.75" height="14" fill-rule="evenodd"><path d="M316.900 18C311.600 7 300.400 0 288.100 0s-23.400 7-28.800 18L195 150.300 51.400 171.500c-12 1.800-22 10.200-25.700 21.700s-.700 24.200 7.900 32.700L137.800 329 113.200 474.700c-2 12 3 24.200 12.900 31.300s23 8 33.800 2.300l128.300-68.500 128.300 68.500c10.800 5.700 23.900 4.900 33.800-2.300s14.900-19.300 12.900-31.300L438.500 329 542.700 225.900c8.600-8.500 11.700-21.200 7.900-32.700s-13.700-19.900-25.700-21.700L381.200 150.300 316.900 18z"/></svg></span><span class="a b"><svg viewBox="0 0 384 512" width="10.5" height="14" fill-rule="evenodd"><path d="M0 48V487.700C0 501.100 10.900 512 24.300 512c5 0 9.900-1.500 14-4.400L192 400 345.700 507.600c4.100 2.900 9 4.400 14 4.400c13.400 0 24.300-10.900 24.300-24.300V48c0-26.500-21.500-48-48-48H48C21.500 0 0 21.500 0 48z"/></svg></span><span class="a t"><svg viewBox="0 0 448 512" width="12.25" height="14" fill-rule="evenodd"><path d="M135.200 17.700L128 32H32C14.300 32 0 46.300 0 64S14.300 96 32 96H416c17.700 0 32-14.300 32-32s-14.300-32-32-32H320l-7.200-14.300C307.400 6.800 296.300 0 284.200 0H163.800c-12.100 0-23.200 6.800-28.600 17.700zM416 128H32L53.200 467c1.600 25.300 22.600 45 47.900 45H346.900c25.300 0 46.300-19.700 47.900-45L416 128z"/></svg></span></div><div class="td c1"></div><div class="td c2"><span style="letter-spacing:0.215px">System Notification</span></div><div class="td c3"><span style="letter-spacing:0.015px">Password Expiry Reminder</span></div><div class="td c4"><div class="ln" style="letter-spacing:0.106px">Dear User,Your password will expire</div><div class="ln" style="letter-spacing:-0.351px">in...</div></div><div class="td c5"></div><div class="td c6"><span style="letter-spacing:0.243px">2025-04-25 21:52:07</span></div></div>
<div class="hl" style="top:524px"></div><div class="tr one un" style="top:476.0px"><div class="td c0"><span class="cb"></span><span class="a s"><svg viewBox="0 0 576 512" width="15.75" height="14" fill-rule="evenodd"><path d="M316.900 18C311.600 7 300.400 0 288.100 0s-23.400 7-28.800 18L195 150.300 51.400 171.500c-12 1.800-22 10.200-25.700 21.700s-.700 24.200 7.900 32.700L137.800 329 113.200 474.700c-2 12 3 24.200 12.900 31.300s23 8 33.800 2.300l128.300-68.500 128.300 68.500c10.800 5.700 23.900 4.900 33.800-2.300s14.900-19.300 12.900-31.300L438.500 329 542.700 225.900c8.600-8.500 11.700-21.200 7.900-32.700s-13.700-19.900-25.700-21.700L381.200 150.300 316.900 18z"/></svg></span><span class="a b"><svg viewBox="0 0 384 512" width="10.5" height="14" fill-rule="evenodd"><path d="M0 48V487.700C0 501.100 10.900 512 24.300 512c5 0 9.900-1.500 14-4.400L192 400 345.700 507.600c4.100 2.900 9 4.400 14 4.400c13.400 0 24.300-10.900 24.300-24.300V48c0-26.500-21.500-48-48-48H48C21.500 0 0 21.500 0 48z"/></svg></span><span class="a t"><svg viewBox="0 0 448 512" width="12.25" height="14" fill-rule="evenodd"><path d="M135.200 17.700L128 32H32C14.300 32 0 46.300 0 64S14.300 96 32 96H416c17.700 0 32-14.300 32-32s-14.300-32-32-32H320l-7.200-14.300C307.400 6.800 296.300 0 284.200 0H163.800c-12.100 0-23.200 6.800-28.600 17.700zM416 128H32L53.200 467c1.600 25.300 22.600 45 47.900 45H346.900c25.300 0 46.300-19.700 47.900-45L416 128z"/></svg></span></div><div class="td c1"></div><div class="td c2"><span style="letter-spacing:0.195px">mailer-daemon@mail.zoho.com</span></div><div class="td c3"><span style="letter-spacing:0.175px">Undelivered Mail Returned to Sender</span></div><div class="td c4"></div><div class="td c5"></div><div class="td c6"><span style="letter-spacing:0.557px">2025-05-02 20:57:04</span></div></div>
<div class="hl" style="top:573px"></div><div class="tr one un" style="top:525.0px"><div class="td c0"><span class="cb"></span><span class="a s"><svg viewBox="0 0 576 512" width="15.75" height="14" fill-rule="evenodd"><path d="M316.900 18C311.600 7 300.400 0 288.100 0s-23.400 7-28.800 18L195 150.300 51.400 171.500c-12 1.800-22 10.200-25.700 21.700s-.700 24.200 7.900 32.700L137.800 329 113.200 474.700c-2 12 3 24.200 12.900 31.300s23 8 33.800 2.300l128.300-68.500 128.300 68.500c10.800 5.700 23.900 4.900 33.800-2.300s14.900-19.300 12.900-31.300L438.500 329 542.700 225.900c8.600-8.500 11.700-21.200 7.900-32.700s-13.700-19.900-25.700-21.700L381.200 150.300 316.900 18z"/></svg></span><span class="a b"><svg viewBox="0 0 384 512" width="10.5" height="14" fill-rule="evenodd"><path d="M0 48V487.700C0 501.100 10.900 512 24.300 512c5 0 9.900-1.500 14-4.400L192 400 345.700 507.600c4.100 2.900 9 4.400 14 4.400c13.400 0 24.300-10.900 24.300-24.300V48c0-26.500-21.500-48-48-48H48C21.500 0 0 21.500 0 48z"/></svg></span><span class="a t"><svg viewBox="0 0 448 512" width="12.25" height="14" fill-rule="evenodd"><path d="M135.200 17.700L128 32H32C14.300 32 0 46.300 0 64S14.300 96 32 96H416c17.700 0 32-14.300 32-32s-14.300-32-32-32H320l-7.200-14.300C307.400 6.800 296.300 0 284.200 0H163.800c-12.100 0-23.200 6.800-28.600 17.700zM416 128H32L53.200 467c1.600 25.300 22.600 45 47.900 45H346.900c25.300 0 46.300-19.700 47.900-45L416 128z"/></svg></span></div><div class="td c1"></div><div class="td c2"><span style="letter-spacing:0.202px">Themesic</span></div><div class="td c3"><span style="letter-spacing:0.311px">Support Ticket Not Opened</span></div><div class="td c4"></div><div class="td c5"></div><div class="td c6"><span style="letter-spacing:0.546px">2025-05-04 21:06:04</span></div></div>
<div class="hl" style="top:622px"></div><div class="tr one un" style="top:574.0px"><div class="td c0"><span class="cb"></span><span class="a s"><svg viewBox="0 0 576 512" width="15.75" height="14" fill-rule="evenodd"><path d="M316.900 18C311.600 7 300.400 0 288.100 0s-23.400 7-28.800 18L195 150.300 51.400 171.500c-12 1.800-22 10.200-25.700 21.700s-.700 24.200 7.900 32.700L137.800 329 113.200 474.700c-2 12 3 24.200 12.900 31.300s23 8 33.800 2.300l128.300-68.500 128.300 68.500c10.800 5.700 23.900 4.900 33.800-2.300s14.900-19.300 12.900-31.300L438.500 329 542.700 225.900c8.600-8.500 11.700-21.200 7.900-32.700s-13.700-19.900-25.700-21.700L381.200 150.300 316.900 18z"/></svg></span><span class="a b"><svg viewBox="0 0 384 512" width="10.5" height="14" fill-rule="evenodd"><path d="M0 48V487.700C0 501.100 10.900 512 24.300 512c5 0 9.900-1.500 14-4.400L192 400 345.700 507.600c4.100 2.900 9 4.400 14 4.400c13.400 0 24.300-10.900 24.300-24.300V48c0-26.500-21.500-48-48-48H48C21.500 0 0 21.500 0 48z"/></svg></span><span class="a t"><svg viewBox="0 0 448 512" width="12.25" height="14" fill-rule="evenodd"><path d="M135.200 17.700L128 32H32C14.300 32 0 46.300 0 64S14.300 96 32 96H416c17.700 0 32-14.300 32-32s-14.300-32-32-32H320l-7.200-14.300C307.400 6.800 296.300 0 284.200 0H163.800c-12.100 0-23.200 6.800-28.600 17.700zM416 128H32L53.200 467c1.600 25.300 22.600 45 47.900 45H346.900c25.300 0 46.300-19.700 47.900-45L416 128z"/></svg></span></div><div class="td c1"></div><div class="td c2"><span style="letter-spacing:0.195px">mailer-daemon@mail.zoho.com</span></div><div class="td c3"><span style="letter-spacing:0.233px">Mail Delivery Status Notification (Delay)</span></div><div class="td c4"></div><div class="td c5"></div><div class="td c6"><span style="letter-spacing:0.557px">2025-05-04 21:48:03</span></div></div>
<div class="tr one un" style="top:623.0px;height:48px"><div class="td c0"><span class="cb"></span><span class="a s"><svg viewBox="0 0 576 512" width="15.75" height="14" fill-rule="evenodd"><path d="M316.900 18C311.600 7 300.400 0 288.100 0s-23.400 7-28.800 18L195 150.300 51.400 171.500c-12 1.800-22 10.200-25.700 21.700s-.700 24.200 7.900 32.700L137.800 329 113.200 474.700c-2 12 3 24.200 12.900 31.300s23 8 33.800 2.300l128.300-68.500 128.300 68.500c10.800 5.700 23.900 4.900 33.800-2.300s14.900-19.300 12.900-31.300L438.500 329 542.700 225.900c8.600-8.500 11.700-21.200 7.900-32.700s-13.700-19.900-25.700-21.700L381.200 150.300 316.900 18z"/></svg></span><span class="a b"><svg viewBox="0 0 384 512" width="10.5" height="14" fill-rule="evenodd"><path d="M0 48V487.700C0 501.100 10.900 512 24.300 512c5 0 9.900-1.500 14-4.400L192 400 345.700 507.600c4.100 2.900 9 4.400 14 4.400c13.400 0 24.300-10.900 24.300-24.300V48c0-26.500-21.500-48-48-48H48C21.500 0 0 21.500 0 48z"/></svg></span><span class="a t"><svg viewBox="0 0 448 512" width="12.25" height="14" fill-rule="evenodd"><path d="M135.200 17.700L128 32H32C14.300 32 0 46.300 0 64S14.300 96 32 96H416c17.700 0 32-14.300 32-32s-14.300-32-32-32H320l-7.200-14.300C307.400 6.800 296.300 0 284.200 0H163.800c-12.100 0-23.200 6.800-28.600 17.700zM416 128H32L53.200 467c1.600 25.300 22.600 45 47.900 45H346.900c25.300 0 46.300-19.700 47.900-45L416 128z"/></svg></span></div><div class="td c1"></div><div class="td c2"><span style="letter-spacing:0.195px">mailer-daemon@mail.zoho.com</span></div><div class="td c3"><span style="letter-spacing:0.175px">Undelivered Mail Returned to Sender</span></div><div class="td c4"></div><div class="td c5"></div><div class="td c6"><span style="letter-spacing:0.519px">2025-05-05 21:00:06</span></div></div>
</div>
</div>
<div class="cursor"><svg viewBox="0 0 12 19" width="12" height="19"><path d="M1 1v15l3.500-3.400 2.300 5.300 2.200-1-2.300-5.100H11z" fill="#fff" stroke="#000" stroke-width="1"/></svg></div>
</body>
</html>
